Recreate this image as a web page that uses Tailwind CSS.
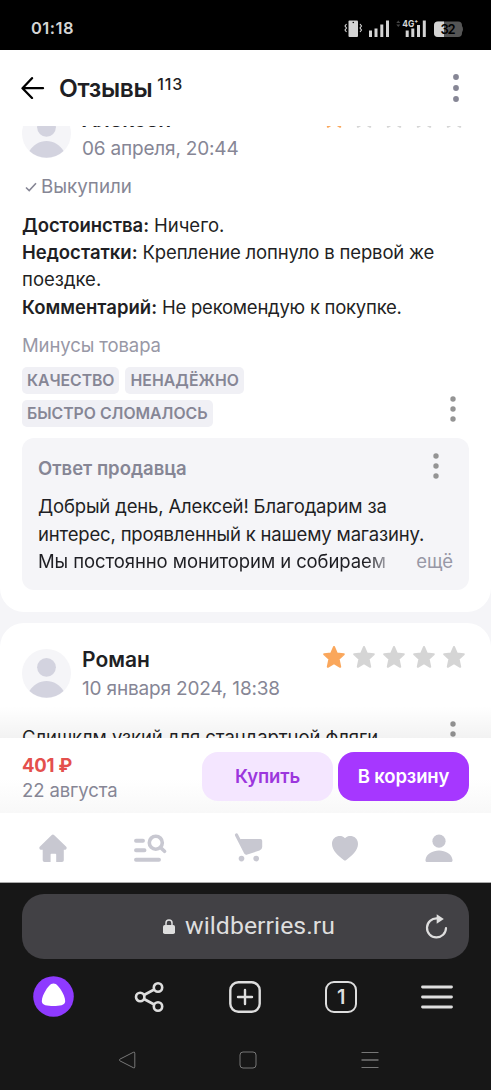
<!DOCTYPE html>
<html lang="ru">
<head>
<meta charset="utf-8">
<title>Отзывы</title>
<script src="https://cdn.jsdelivr.net/npm/@tailwindcss/browser@4"></script>
</head>
<body class="w-[491px] h-[1090px] overflow-hidden bg-[#171717] font-['Inter','Noto_Sans',sans-serif] text-[#1f1f24]">
<svg class="hidden">
  <defs>
    <symbol id="star" viewBox="0 0 22 22"><path d="M11 1 13.800 7.400 20.800 8.200 15.600 13 17.200 20.800 11 17.200 4.800 20.800 6.400 13 1.200 8.200 8.200 7.400Z" fill="currentColor" stroke="currentColor" stroke-width="2" stroke-linejoin="round"/></symbol>
    <symbol id="dots" viewBox="0 0 6 26"><g fill="currentColor"><circle cx="3" cy="3" r="2.700"/><circle cx="3" cy="13" r="2.700"/><circle cx="3" cy="23" r="2.700"/></g></symbol>
    <symbol id="avatar" viewBox="0 0 49 49"><circle cx="24.500" cy="24.500" r="24.500" fill="#f5f5f8"/><circle cx="24.500" cy="18.300" r="9.400" fill="#d3d3df"/><path d="M7.500 42C11 36 17.500 32 24.500 32S38 36 41.500 42A24.500 24.500 0 0 1 7.500 42Z" fill="#d3d3df"/></symbol>
  </defs>
</svg>
<div class="flex h-full flex-col">
  <div class="flex h-[50px] shrink-0 items-center justify-between bg-black pl-[31px] pr-[27px] pt-[7px]">
    <span class="-mt-[2px] whitespace-nowrap text-[16.500px] font-semibold leading-5 tracking-[0.46px] text-[#d4d4d4]">01:18</span>
    <svg class="h-[20px] w-[120px]" viewBox="344 19 120 20">
      <rect x="348.500" y="20.500" width="9.500" height="16.500" rx="1" fill="#d4d4d4"/><circle cx="353.300" cy="22.500" r=".8" fill="#000"/>
      <path d="M346.500 24l-1.500 2 1.500 2-1.500 2 1.500 2M360 24l1.500 2-1.500 2 1.500 2-1.500 2" fill="none" stroke="#d4d4d4" stroke-width="1.100"/>
      <path d="M369 30.500h3v6.500h-3zM374.500 28.500h3V37h-3zM380.300 24.500h3V37h-3zM386 20.500h3V37h-3zM405.700 30.500h3v6.500h-3zM411.300 28.500h3V37h-3zM417 25h3V37h-3zM422.800 20.500h3V37h-3z" fill="#d4d4d4"/>
      <path d="M396.300 23l2-2.500 2 2.500zM396.300 24.500l2 2.500 2-2.500z" fill="#444"/>
      <text x="402.300" y="27.200" font-size="9.500" font-weight="700" fill="#d4d4d4" stroke="#000" stroke-width="1.500" paint-order="stroke" textLength="16" lengthAdjust="spacingAndGlyphs">4G⁺</text>
      <rect x="434" y="21.500" width="28" height="15.500" rx="4" fill="#555"/><path d="M462 26q2 3.200 0 6.500z" fill="#555"/>
      <path d="M438 21.500h6V37h-6a4 4 0 0 1-4-4v-7.500a4 4 0 0 1 4-4z" fill="#d4d4d4"/>
      <text x="440.500" y="34" font-size="13" font-weight="600" fill="#000" textLength="15">32</text>
    </svg>
  </div>

  <header class="flex h-[76px] shrink-0 items-center bg-white pl-[21px] pr-[32px]">
    <svg class="h-[22px] w-[24px]" viewBox="0 0 24 22"><path d="M22 11.200H2M11 1.200 1.500 11.200 11 21" fill="none" stroke="#000" stroke-width="2.300" stroke-linecap="round" stroke-linejoin="round"/></svg>
    <h1 class="ml-[14px] whitespace-nowrap text-[24.500px] font-semibold leading-8 tracking-[-0.35px]">Отзывы</h1>
    <span class="-mt-[9px] ml-[5px] whitespace-nowrap text-[16px] font-medium leading-5 tracking-[0.9px]">113</span>
    <svg class="ml-auto h-[28px] w-[6px] text-[#868695]" viewBox="0 0 6 28"><g fill="currentColor"><circle cx="3" cy="3" r="2.900"/><circle cx="3" cy="14" r="2.900"/><circle cx="3" cy="25" r="2.900"/></g></svg>
  </header>

  <main class="relative h-[612px] shrink-0 overflow-hidden bg-[#f5f5f8]">
    <article class="-mt-[43px] h-[529px] rounded-[24px] bg-white px-[22px] pt-[26px]">
      <div class="flex h-[56px] items-start">
        <svg class="size-[49px]"><use href="#avatar"/></svg>
        <div class="-mt-[3px] ml-[11px] leading-7">
          <div><b class="whitespace-nowrap text-[21px] font-semibold">Алексей</b></div>
          <div class="flex"><span class="whitespace-nowrap text-[19px] tracking-[-0.19px] text-[#868695]">06 апреля, 20:44</span></div>
        </div>
        <div class="-mt-[3px] ml-auto mr-1 flex gap-2 text-[#d5d5d5]">
          <svg class="size-[22px] text-[#faa75c]"><use href="#star"/></svg><svg class="size-[22px]"><use href="#star"/></svg><svg class="size-[22px]"><use href="#star"/></svg><svg class="size-[22px]"><use href="#star"/></svg><svg class="size-[22px]"><use href="#star"/></svg>
        </div>
      </div>
      <div class="mt-[8px] flex h-7 items-center text-[18.800px] text-[#868695]">
        <svg class="ml-[3px] mr-[4px] h-[10px] w-[12px]" viewBox="0 0 12 10"><path d="M1 5.500 4.200 8.500 11 1.200" fill="none" stroke="currentColor" stroke-width="1.600"/></svg>
        <span class="whitespace-nowrap">Выкупили</span>
      </div>
      <div class="mt-[11px] text-[18.500px] leading-[27.200px]">
        <div class="flex gap-[5px]"><b class="whitespace-nowrap font-semibold tracking-[-0.06px]">Достоинства:</b><span class="whitespace-nowrap">Ничего.</span></div>
        <div class="flex gap-[5px]"><b class="whitespace-nowrap font-semibold">Недостатки:</b><span class="whitespace-nowrap tracking-[-0.17px]">Крепление лопнуло в первой же</span></div>
        <div class="flex"><span class="whitespace-nowrap">поездке.</span></div>
        <div class="flex gap-[5px]"><b class="whitespace-nowrap font-semibold">Комментарий:</b><span class="whitespace-nowrap tracking-[-0.25px]">Не рекомендую к покупке.</span></div>
      </div>
      <div class="mt-[10px] flex text-[18.500px] leading-7 text-[#9898a6]"><span class="whitespace-nowrap tracking-[-0.1px]">Минусы товара</span></div>
      <div class="mt-[8px] flex items-end justify-between">
        <div class="flex w-[300px] flex-wrap gap-[6px] text-[15.800px] font-semibold leading-[27px] text-[#868695]">
          <span class="whitespace-nowrap rounded-[5px] bg-[#f0f0f5] px-[5px] tracking-[-0.06px]">КАЧЕСТВО</span>
          <span class="whitespace-nowrap rounded-[5px] bg-[#f0f0f5] px-[5px] tracking-[0.07px]">НЕНАДЁЖНО</span>
          <span class="whitespace-nowrap rounded-[5px] bg-[#f0f0f5] px-[5px]">БЫСТРО СЛОМАЛОСЬ</span>
        </div>
        <svg class="mb-[5px] mr-[13px] h-[26px] w-[6px] text-[#949494]"><use href="#dots"/></svg>
      </div>
      <section class="mt-[11px] h-[152px] rounded-[12px] bg-[#f5f5f8] px-4 pt-[16px]">
        <div class="flex h-[30px] items-center justify-between">
          <b class="whitespace-nowrap text-[18.500px] font-semibold text-[#868695]">Ответ продавца</b>
          <svg class="-mt-[6px] mr-[14px] h-[26px] w-[6px] text-[#949494]"><use href="#dots"/></svg>
        </div>
        <div class="mt-[9.500px] text-[18.500px] leading-[27.200px]">
          <div class="flex"><span class="whitespace-nowrap tracking-[-0.16px]">Добрый день, Алексей! Благодарим за</span></div>
          <div class="flex"><span class="whitespace-nowrap tracking-[-0.17px]">интерес, проявленный к нашему магазину.</span></div>
          <div class="flex justify-between"><span class="whitespace-nowrap bg-linear-to-r from-[#1f1f24] from-94% to-[#a0a0a8] bg-clip-text tracking-[-0.09px] text-transparent">Мы постоянно мониторим и собираем</span><span class="whitespace-nowrap text-[#9898a6]">ещё</span></div>
        </div>
      </section>
    </article>

    <article class="mt-[11px] h-[200px] rounded-[24px] bg-white px-[22px] pt-[26px]">
      <div class="flex h-[56px] items-start">
        <svg class="size-[49px]"><use href="#avatar"/></svg>
        <div class="-mt-[3px] ml-[11px] leading-7">
          <div><b class="whitespace-nowrap text-[21px] font-semibold">Роман</b></div>
          <div class="flex"><span class="whitespace-nowrap text-[19px] tracking-[-0.17px] text-[#868695]">10 января 2024, 18:38</span></div>
        </div>
        <div class="-mt-[3px] ml-auto mr-1 flex gap-2 text-[#d5d5d5]">
          <svg class="size-[22px] text-[#faa75c]"><use href="#star"/></svg><svg class="size-[22px]"><use href="#star"/></svg><svg class="size-[22px]"><use href="#star"/></svg><svg class="size-[22px]"><use href="#star"/></svg><svg class="size-[22px]"><use href="#star"/></svg>
        </div>
      </div>
      <div class="mt-[19px] flex items-start justify-between text-[18.500px] leading-[27.200px]"><span class="whitespace-nowrap tracking-[-0.06px]">Слишклм узкий для стандартной фляги</span>
        <svg class="-mt-[3px] mr-[13px] h-[26px] w-[6px] text-[#949494]"><use href="#dots"/></svg>
      </div>
    </article>
    <div class="absolute inset-x-0 bottom-0 h-[32px] bg-linear-to-t from-black/5 to-transparent"></div>
  </main>

  <section class="flex h-[75px] shrink-0 items-center bg-linear-to-b from-white from-55% to-[#f8f8f8] px-[22px]">
    <div class="mt-[5px] leading-[25px]">
      <div class="flex"><b class="whitespace-nowrap text-[18.500px] font-bold tracking-[-0.2px] text-[#e4504d]">401 ₽</b></div>
      <div class="flex"><span class="whitespace-nowrap text-[18.500px] tracking-[-0.1px] text-[#868695]">22 августа</span></div>
    </div>
    <button class="ml-auto mr-[5px] mt-[2px] h-[49px] w-[131px] whitespace-nowrap rounded-[16px] bg-[#f4e6ff] text-[18.500px] font-semibold tracking-[-0.12px] text-[#9c36dd]">Купить</button>
    <button class="mt-[2px] h-[49px] w-[131px] whitespace-nowrap rounded-[16px] bg-[#a637ff] text-[18.500px] font-semibold tracking-[-0.12px] text-white">В корзину</button>
  </section>

  <nav class="grid h-[70px] shrink-0 grid-cols-5 items-center justify-items-center border-b border-[#aaa] bg-white pl-[5px] pr-[4px] text-[#c8c8d1]">
    <svg class="h-[32px] w-[32px]" viewBox="0 0 32 32" fill="currentColor"><path d="M14.500 3.200a2 2 0 0 1 2.800 0L29 14.500a1.800 1.800 0 0 1-1 3.200h-1.200v10.500a1.800 1.800 0 0 1-1.800 1.800h-5.800v-7.500a.8.800 0 0 0-.8-.8h-4a.8.800 0 0 0-.8.800V30H7.500a1.800 1.800 0 0 1-1.800-1.800V17.700H4a1.800 1.800 0 0 1-1-3.200z"/></svg>
    <svg class="h-[32px] w-[34px]" viewBox="0 0 34 32" fill="none" stroke="currentColor" stroke-width="3.900" stroke-linecap="round"><path d="M3 8.800h7M3 18.300h8.500M3 27.800h23"/><circle cx="22.800" cy="10.700" r="6.500" stroke-width="3.600"/><path d="m27.500 15.500 4 3.800" stroke-width="3.600"/></svg>
    <svg class="ml-[6px] h-[32px] w-[32px]" viewBox="0 0 32 32" fill="currentColor"><path d="M3.500 3 12.500 20.500" stroke="currentColor" stroke-width="3.200" stroke-linecap="round"/><path d="M7 7h20.500A1.700 1.700 0 0 1 29.200 8.700V15a4 4 0 0 1-2.700 3.600L12.800 23z"/><circle cx="8.500" cy="26.600" r="2.800"/><circle cx="23.200" cy="26.600" r="2.800"/></svg>
    <svg class="ml-[6px] h-[32px] w-[32px]" viewBox="0 0 32 32" fill="currentColor"><path d="M16 6.300C18 4 21 3.700 23.300 4.300 27 5.300 29 8.300 29 12c0 6.500-6 11.500-11.700 16a2 2 0 0 1-2.600 0C9 23.500 3 18.500 3 12c0-3.700 2-6.700 5.700-7.700C11 3.700 14 4 16 6.300z"/></svg>
    <svg class="h-[32px] w-[32px]" viewBox="0 0 32 32" fill="currentColor"><circle cx="16" cy="9.200" r="6.600"/><path d="M4.500 30a2 2 0 0 1-2-2.300C3.300 22 9.500 18.500 16 18.500S28.700 22 29.500 27.700a2 2 0 0 1-2 2.300z"/></svg>
  </nav>

  <footer class="h-[207px] shrink-0 bg-[#171717] px-[22px] pt-[11px] text-[#dedede]">
    <div class="flex h-[65px] items-center rounded-[22px] bg-[#424145] pl-[141px] pr-[21px]">
      <svg class="h-[15px] w-[12px]" viewBox="0 0 12 15"><rect y="6" width="12" height="9" rx="1.800" fill="currentColor"/><path d="M3 7V4a3 3 0 0 1 6 0v3" fill="none" stroke="currentColor" stroke-width="1.500"/></svg>
      <span class="-mt-[2px] ml-[10px] whitespace-nowrap font-['Roboto',sans-serif] text-[24.800px] leading-8 tracking-[0.06px]">wildberries.ru</span>
      <svg class="ml-auto h-[26px] w-[24px]" viewBox="0 0 24 26"><path d="M13 4.400A9.500 9.500 0 1 0 22 14" fill="none" stroke="currentColor" stroke-width="2.200" stroke-linecap="round"/><path d="M12.700.300 19.800 5 12.700 9.800z" fill="currentColor"/></svg>
    </div>
    <div class="-mx-[16px] mt-[17px] grid h-[41px] grid-cols-5 items-center justify-items-center">
      <svg class="size-[41px]" viewBox="0 0 41 41"><circle cx="20.500" cy="20.500" r="20.300" fill="#8e3aff"/><path d="M20.500 7.500c3.300 0 5.500 3.500 7.500 6.500 2.200 3.500 4.200 7.500 4.200 11.200 0 4-5.700 4.800-11.700 4.800S8.800 29.200 8.800 25.200c0-3.700 2-7.700 4.200-11.200 2-3 4.200-6.500 7.500-6.500z" fill="#fff"/></svg>
      <svg class="size-[32px]" viewBox="0 0 32 32" fill="none" stroke="currentColor" stroke-width="2.600"><circle cx="6.200" cy="16" r="4.200"/><circle cx="24" cy="6.500" r="4.200"/><circle cx="24" cy="25.500" r="4.200"/><path d="M10 14 20.200 8.500M10 18l10.200 5.500"/></svg>
      <svg class="size-[32px]" viewBox="0 0 32 32" fill="none" stroke="currentColor" stroke-width="2.400"><rect x="1.300" y="1.300" width="29.400" height="29.400" rx="8"/><path d="M16 9v14M9 16h14" stroke-linecap="round"/></svg>
      <div class="flex size-[32px] items-center justify-center rounded-[9px] border-2 border-[#dedede] text-[20px] font-semibold leading-5">1</div>
      <svg class="h-[24px] w-[32px]" viewBox="0 0 32 24" stroke="currentColor" stroke-width="2.800" stroke-linecap="round"><path d="M1.500 2h29M1.500 12h29M1.500 22h29"/></svg>
    </div>
    <div class="ml-[44.500px] mt-[33px] grid h-[20px] w-[364px] grid-cols-3 items-center justify-items-center text-[#777]">
      <svg class="size-[18px]" viewBox="0 0 18 18"><path d="M15.300 1.300a1 1 0 0 1 1.500.8v13.800a1 1 0 0 1-1.500.8L2 9.900a1 1 0 0 1 0-1.800z" fill="none" stroke="currentColor"/></svg>
      <svg class="size-[18px]" viewBox="0 0 18 18"><rect x="1" y="1" width="16" height="16" rx="3" fill="none" stroke="currentColor"/></svg>
      <svg class="size-[18px]" viewBox="0 0 18 18" stroke="currentColor"><path d="M.5 1.500h17M.5 16.500h17"/><path d="M.5 9h17" stroke-width="1.500"/></svg>
    </div>
  </footer>
</div>
</body>
</html>
